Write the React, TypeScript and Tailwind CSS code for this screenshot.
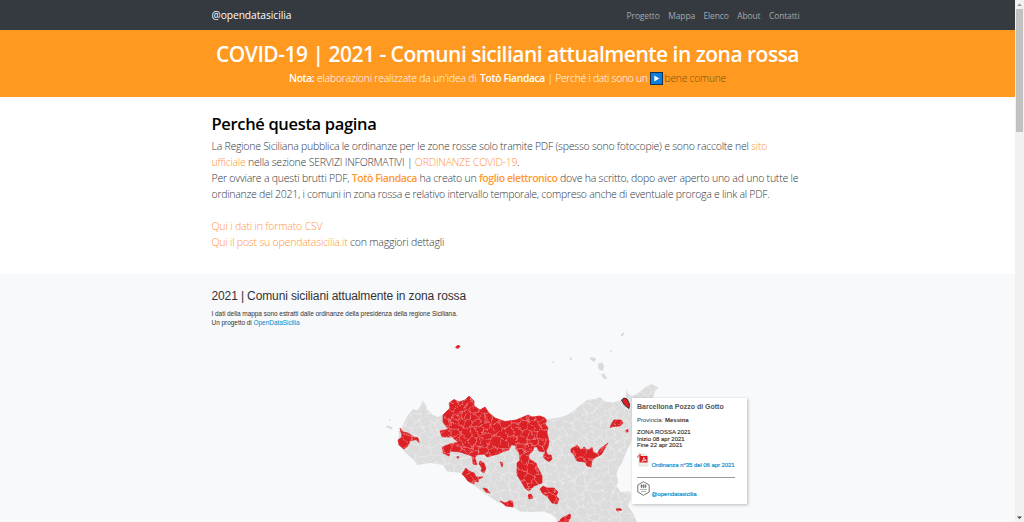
import type { ReactNode } from "react";

type Pt = [number, number];

const LAND: string =
  "M422.7 400.5L426 405L427 409L433 415L438 417L445 413L450 408L449 403L454 399L459 402L465 400L469 396L474 401L474 406L480 410L485 407L489 413L495 418L505 421.5L516 420L528 415L532 417L540 416L547 419L557 418L567 415L572 412L577 408L583 403L587 400L595 399L600 397L605 401.5L613 402.5L620 400.5L626 398L626.5 389L628 394L632 396L640 391.7L646 386.7L651.5 384L659 387.7L655 390.7L653 398L645 412L637 425L634 430L632 436L631 443L627 450L622 463L618 469L616.5 474L618 481L617 487L621 492L630 491.5L631 498L628 506L633 513L637 522V526H558L556 518L551 514L543 511.5L530 512L520 511.5L513 507L497 502L483 492L475 486L468 482L462 473L447 471.5L443 465L430 463L417 465L414 460L408 455L401 448L398 440L400 431L403 425L407 416.5L413 409L417 410.5L420.5 406Z";

const RED: string[] = [
  "M443 415L445 413L450 408L449 403L454 399.5L459 402L465 400L469 396L474 401L474 406L480 410L485 407L489 413L495 418L505 421.5L516 420L528 415L532 417L540 416L545 418L547 421L545 424L548 428L547 433L549 441L548 447L546 451L548 455L551 455L552 459L549 462L545 459L543 457L545 452L539 451L537 447L534 447L533 451L529 454L529 459L536 463L538 468L542 476L542 483L534 486L529 491L525 488L521 481L517 475L517 463L520 460L519 453L516 449L515 445L511 445L509 450L505 451L498 454L487 457L484 454L477 455L475 458L477 465L473 464L472 456L460 452L450 451L449 456L443 453L442.5 447L450 444L458 442L452 437L442 437L440 431L448 429L443 422Z",
  "M400 428L403 432L408 433L413 436.5L418 438L419 442.5L416 439.5L410 441L408 446L404 449L399 445L398 440L402 437Z",
  "M466 468L469 471L474 473L476 477L483 477L479 479L478 482L475 481L474 484L468 481L465 477L462 474Z",
  "M480 461L484 463L486 468L484 473L481 471L482 468L479 464Z",
  "M483 488L487 489L490 493L486 492Z",
  "M500 501L506 503L510 500L513 502L513 507L506 506Z",
  "M500 462L503 463L502 467Z",
  "M457 456.5H459V458H457Z",
  "M540 489L543 486L547 488L554 488L558 492L556 496L559 499L557 504L552 503L547 496L543 494Z",
  "M528 495L531 494L533 498L529 499Z",
  "M571 449L577 445L581 450L584 447L588 450L592 447L593 452L597 454L600 449L604 446L608 443L605 448L601 455L596 457L592 460L591 467L587 466L585 462L577 461L574 455L571 452Z",
  "M612 423L614 420L621 420L623 423L620 426L613 426.5L610 427.5Z",
  "M626 430L628 429.5V432H626Z",
  "M616 509L620 508.5L622 510L617 511Z",
  "M558 522L562 518L566 516L570 514L571 517L568 522Z",
  "M455.5 347L458 345.3L460 346L459 347.8L457 348.5Z",
];

const ISLES: string[] = [
  "M621 334.5L623.5 332.5L624.5 333.5L623 336H621Z",
  "M589.5 358L592 357L596 358.5L595 361.5L592 361Z",
  "M598.5 363.5L602 362.5L604 366L603 371L599 369.5L598 366Z",
  "M601.5 374L604 373.5L607 378L605 379.5L602 376.5Z",
  "M569 358L571 357.5L572.5 360.5L570.5 360Z",
  "M552.5 361L554 361.5V363H552.5Z",
  "M610.5 350.5H612V352H610.5Z",
  "M385.5 426.5L388.5 425.5L392.5 428L391.5 429.5Z",
  "M389 419L391 419.5L390 421.5Z",
  "M398.5 430L400 431L400.5 435L399 434Z",
];

// Municipal borders: Voronoi cells around jittered sites, denser in the north.
function cellBorders(): string {
  let seed = 17;
  const rnd = () => {
    seed = (seed * 16807) % 2147483647;
    return seed / 2147483647;
  };
  const sites: Pt[] = [];
  for (let y = 384; y < 528; y += 9) {
    for (let x = 394; x < 662; x += 9.5) {
      const dense = (x > 445 && x < 530 && y < 450) || (x > 575 && y < 450);
      sites.push([x + rnd() * 9, y + rnd() * 8.5]);
      if (dense && rnd() > 0.5) sites.push([x + rnd() * 9, y + rnd() * 8.5]);
    }
  }
  const parts: string[] = [];
  sites.forEach((a, i) => {
    let poly: Pt[] = [
      [a[0] - 15, a[1] - 15],
      [a[0] + 15, a[1] - 15],
      [a[0] + 15, a[1] + 15],
      [a[0] - 15, a[1] + 15],
    ];
    sites.forEach((b, j) => {
      if (i === j || Math.abs(a[0] - b[0]) > 30 || Math.abs(a[1] - b[1]) > 30) return;
      const nx = b[0] - a[0];
      const ny = b[1] - a[1];
      const c = (nx * (a[0] + b[0]) + ny * (a[1] + b[1])) / 2;
      const next: Pt[] = [];
      poly.forEach((p, k) => {
        const q = poly[(k + 1) % poly.length];
        const dp = nx * p[0] + ny * p[1] - c;
        const dq = nx * q[0] + ny * q[1] - c;
        if (dp <= 0) next.push(p);
        if (dp * dq < 0) {
          const t = dp / (dp - dq);
          next.push([p[0] + (q[0] - p[0]) * t, p[1] + (q[1] - p[1]) * t]);
        }
      });
      poly = next;
    });
    parts.push("M" + poly.map((p) => p[0].toFixed(1) + " " + p[1].toFixed(1)).join("L") + "Z");
  });
  return parts.join("");
}

const BORDERS = cellBorders();

function SicilyMap() {
  return (
    <svg className="block h-[194px] w-[588px]" viewBox="212 328 588 194">
      <defs>
        <clipPath id="land">
          <path d={LAND} />
        </clipPath>
        <filter id="rough" x="-5%" y="-5%" width="110%" height="110%">
          <feTurbulence type="fractalNoise" baseFrequency="0.22" numOctaves="2" seed="4" />
          <feDisplacementMap in="SourceGraphic" scale="6" xChannelSelector="R" yChannelSelector="G" />
        </filter>
      </defs>
      <path d={LAND} fill="#dcdcdc" />
      {ISLES.map((d) => (
        <path key={d} d={d} fill="#dadada" />
      ))}
      {RED.map((d) => (
        <path key={d} d={d} fill="#dc2126" stroke="#dc2126" strokeWidth="0.7" />
      ))}
      <g clipPath="url(#land)">
        <path d={BORDERS} fill="none" stroke="#fff" strokeOpacity="0.34" strokeWidth="0.55" filter="url(#rough)" />
      </g>
      <path d="M621.5 400L624 398L627 399L629.5 404L629 408.5L624.5 405Z" fill="#dc2126" stroke="#222" strokeWidth="0.9" />
    </svg>
  );
}

const Line = ({ className, children }: { className: string; children: ReactNode }) => (
  <div className={"h-4 whitespace-nowrap " + className}>{children}</div>
);

const A = ({ children }: { children: ReactNode }) => (
  <a href="#" className="text-[#ff9440]">
    {children}
  </a>
);

const Strong = ({ children }: { children: ReactNode }) => (
  <a href="#" className="font-semibold tracking-[-0.44px] text-[#ff9933]">
    {children}
  </a>
);

function Tooltip() {
  return (
    <aside className="absolute left-[632px] top-[124px] h-[106px] w-[115px] whitespace-nowrap bg-white pl-[5px] pt-[5px] text-[6px] leading-[6.3px] text-[#333] shadow-[1px_1px_3px_rgba(0,0,0,0.25)]">
      <div className="text-[7px] font-bold leading-[8px] text-[#555]">Barcellona Pozzo di Gotto</div>
      <div className="mt-[6px]">
        Provincia: <b>Messina</b>
      </div>
      <div className="mt-[6.2px] [-webkit-text-stroke:0.15px_#333]">
        <div>ZONA ROSSA 2021</div>
        <div>Inizio 08 apr 2021</div>
        <div>Fine 22 apr 2021</div>
      </div>
      <div className="mt-[5px] flex h-[16px] w-[98px] items-end">
        <svg className="mb-[2px] h-[14px] w-[12px]" viewBox="0 0 12 14">
          <path d="M2 1H8.5L11 3.5V13H2Z" fill="#f1eeee" stroke="#ccc" strokeWidth="0.5" />
          <path d="M2.5 3H10.5V9.5H2.5Z" fill="#d8191f" />
          <path d="M4.8 8.5Q7 6.5 6.8 4.4Q7.3 7.4 9.3 7.4Q6.5 7.3 4.8 8.5" fill="none" stroke="#fff" strokeWidth="0.7" />
          <path d="M0.6 4.5Q0.8 2 3.5 2M2.4 0.7L3.8 2L2.4 3.3" fill="none" stroke="#e5453b" strokeWidth="1" />
        </svg>
        <a href="#" className="ml-[2.5px] pb-[1px] text-[#0088ce] tracking-[-0.07px] [-webkit-text-stroke:0.15px_#0088ce]">
          Ordinanza n°35 del 06 apr 2021
        </a>
      </div>
      <hr className="mt-[8px] w-[97.5px] border-t border-[#999]" />
      <div className="mt-[2.5px] flex h-[17px] items-end">
        <svg className="mb-[2px] h-[15px] w-[13px]" viewBox="0 0 13 15">
          <path d="M6.5 0.7L12.2 4V11L6.5 14.3L0.8 11V4Z" fill="#fff" stroke="#666" strokeWidth="0.9" />
          <path d="M3.5 4.3H9.5M3.5 5.8H9.5M4.5 3.5V7M6.5 3.5V7M8.5 3.5V7" stroke="#666" strokeWidth="0.7" />
          <path d="M3 8.4H10M4 10.6H9" stroke="#999" strokeWidth="0.8" />
        </svg>
        <a href="#" className="ml-[1.5px] pb-[1px] text-[#0088ce] tracking-[-0.05px] [-webkit-text-stroke:0.15px_#0088ce]">
          @opendatasicilia
        </a>
      </div>
    </aside>
  );
}

function Scrollbar() {
  return (
    <div className="flex h-full w-[9px] flex-col items-center justify-between bg-[#f1f1f1]">
      <div className="flex flex-col items-center">
        <svg className="h-[9px] w-[9px]" viewBox="0 0 9 9">
          <path d="M4.5 3.5L7 6H2Z" fill="#999" />
        </svg>
        <div className="h-[123px] w-[7px] bg-[#c1c1c1]" />
      </div>
      <svg className="h-[9px] w-[9px]" viewBox="0 0 9 9">
        <path d="M4.5 6L7 3.5H2Z" fill="#444" />
      </svg>
    </div>
  );
}

export default function App() {
  return (
    <div className="flex h-[522px] w-[1024px] overflow-hidden bg-white font-['Open_Sans',sans-serif]">
      <div className="flex w-[1015px] flex-col">
        <nav className="flex h-[30px] items-center justify-between whitespace-nowrap bg-[#343a40] pl-[211.5px] pr-[215.5px]">
          <a href="#" className="pt-[2px] text-[10.25px] tracking-[-0.06px] text-white">
            @opendatasicilia
          </a>
          <div className="flex gap-[8.5px] pt-[2px] text-[8.5px] tracking-[-0.14px] text-[#a4a7aa]">
            <a href="#">Progetto</a>
            <a href="#">Mappa</a>
            <a href="#">Elenco</a>
            <a href="#">About</a>
            <a href="#">Contatti</a>
          </div>
        </nav>
        <header className="h-[67px] whitespace-nowrap bg-[#ff991f] text-white">
          <h1 className="h-[41px] pl-[216px] text-[21px] font-semibold leading-[49px] tracking-[-0.503px]">
            COVID-19 | 2021 - Comuni siciliani attualmente in zona rossa
          </h1>
          <div className="flex h-[15px] items-center pl-[289px] text-[10.25px] font-light leading-[15px]">
            <b className="w-[28px] font-semibold tracking-[-0.4px]">Nota:</b>
            <span className="w-[163px] tracking-[-0.125px]">elaborazioni realizzate da un'idea di</span>
            <b className="w-[67.5px] font-semibold tracking-[-0.32px]">Totò Fiandaca</b>
            <span className="w-[102.5px] tracking-[-0.24px]">| Perché i dati sono un</span>
            <svg className="h-[13px] w-[13px]" viewBox="0 0 13 13">
              <rect x="0.5" y="0.5" width="12" height="12" fill="#0b7fe0" stroke="#17304d" />
              <path d="M4.3 3.6L9.3 6.5L4.3 9.4Z" fill="#fff" />
            </svg>
            <a href="#" className="ml-[1.5px] tracking-[-0.2px] text-[#7a5212]">
              bene comune
            </a>
          </div>
        </header>
        <section className="h-[177px] pl-[211.5px] pt-[17px] text-[10.5px] font-light leading-4 text-[#33383d]">
          <h2 className="mb-1 h-5 text-[16.5px] font-semibold leading-5 tracking-[-0.33px] text-black">Perché questa pagina</h2>
          <Line className="tracking-[-0.247px]">
            La Regione Siciliana pubblica le ordinanze per le zone rosse solo tramite PDF (spesso sono fotocopie) e sono raccolte nel <A>sito</A>
          </Line>
          <Line className="tracking-[-0.219px]">
            <A>ufficiale</A> nella sezione SERVIZI INFORMATIVI | <A>ORDINANZE COVID-19</A>.
          </Line>
          <Line className="tracking-[-0.22px]">
            Per ovviare a questi brutti PDF, <Strong>Totò Fiandaca</Strong> ha creato un <Strong>foglio elettronico</Strong> dove ha scritto, dopo aver aperto uno ad uno tutte le
          </Line>
          <Line className="tracking-[-0.265px]">
            ordinanze del 2021, i comuni in zona rossa e relativo intervallo temporale, compreso anche di eventuale proroga e link al PDF.
          </Line>
          <Line className="mt-4 tracking-[-0.164px]">
            <A>Qui i dati in formato CSV</A>
          </Line>
          <Line className="tracking-[-0.205px]">
            <A>Qui il post su opendatasicilia.it</A> con maggiori dettagli
          </Line>
        </section>
        <section className="relative h-[248px] bg-[#f8f9fb] pl-[212px] font-['Liberation_Sans',sans-serif] text-[#333]">
          <div className="-ml-[0.5px] h-[54px] whitespace-nowrap pt-[15px] text-[6.5px] leading-[9px]">
            <h3 className="mb-[5px] h-[15px] text-[12px] leading-[15px] tracking-[-0.124px]">
              2021 | Comuni siciliani attualmente in zona rossa
            </h3>
            <p className="tracking-[-0.049px]">
              I dati della mappa sono estratti dalle ordinanze della presidenza della regione Siciliana.
            </p>
            <p className="tracking-[-0.042px]">
              Un progetto di{" "}
              <a href="#" className="text-[#0088ce]">
                OpenDataSicilia
              </a>
            </p>
          </div>
          <SicilyMap />
          <Tooltip />
        </section>
      </div>
      <Scrollbar />
    </div>
  );
}
